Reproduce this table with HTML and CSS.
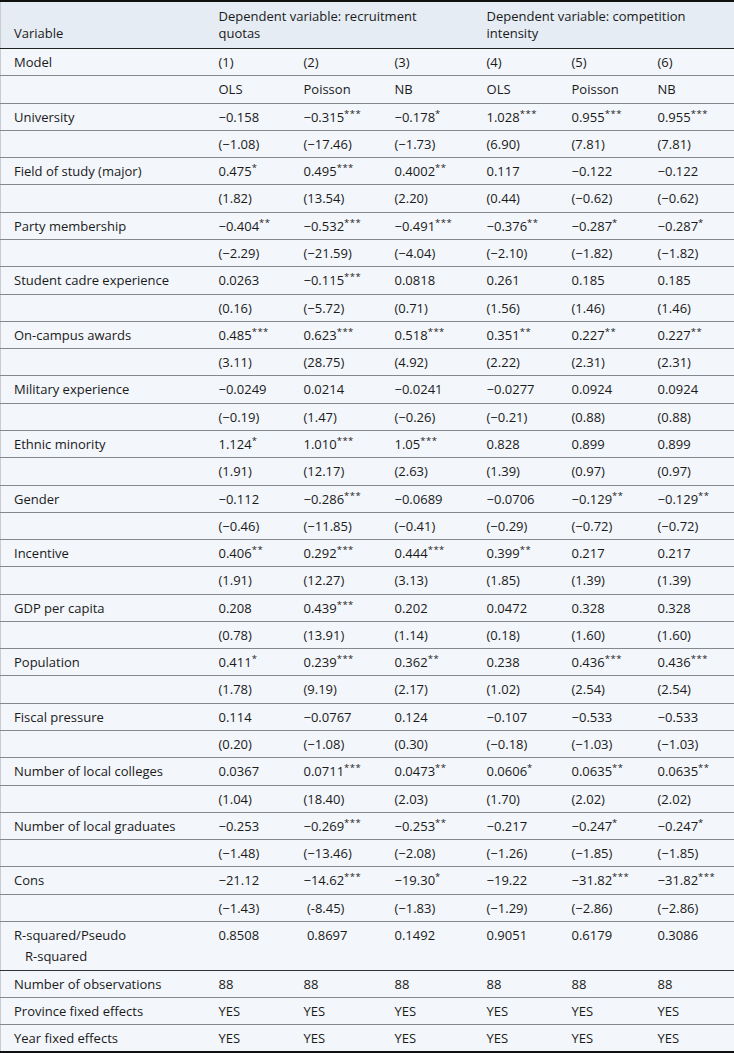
FILE: index.html
```html
<!DOCTYPE html>
<html lang="en">
<head>
<meta charset="utf-8">
<title>Regression results</title>
<link rel="stylesheet" href="styles.css">
</head>
<body>
<table class="tbl">
  <colgroup>
    <col class="c0"><col class="c1"><col class="c2"><col class="c3"><col class="c4"><col class="c5"><col class="c6">
  </colgroup>
  <thead>
    <tr>
      <th>Variable</th>
      <th colspan="3">Dependent variable: recruitment quotas</th>
      <th colspan="3">Dependent variable: competition intensity</th>
    </tr>
  </thead>
  <tbody>
    <tr><td>Model</td><td>(1)</td><td>(2)</td><td>(3)</td><td>(4)</td><td>(5)</td><td>(6)</td></tr>
    <tr><td></td><td>OLS</td><td>Poisson</td><td>NB</td><td>OLS</td><td>Poisson</td><td>NB</td></tr>
    <tr><td>University</td><td>−0.158</td><td>−0.315<sup>***</sup></td><td>−0.178<sup>*</sup></td><td>1.028<sup>***</sup></td><td>0.955<sup>***</sup></td><td>0.955<sup>***</sup></td></tr>
    <tr><td></td><td>(−1.08)</td><td>(−17.46)</td><td>(−1.73)</td><td>(6.90)</td><td>(7.81)</td><td>(7.81)</td></tr>
    <tr><td>Field of study (major)</td><td>0.475<sup>*</sup></td><td>0.495<sup>***</sup></td><td>0.4002<sup>**</sup></td><td>0.117</td><td>−0.122</td><td>−0.122</td></tr>
    <tr><td></td><td>(1.82)</td><td>(13.54)</td><td>(2.20)</td><td>(0.44)</td><td>(−0.62)</td><td>(−0.62)</td></tr>
    <tr><td>Party membership</td><td>−0.404<sup>**</sup></td><td>−0.532<sup>***</sup></td><td>−0.491<sup>***</sup></td><td>−0.376<sup>**</sup></td><td>−0.287<sup>*</sup></td><td>−0.287<sup>*</sup></td></tr>
    <tr><td></td><td>(−2.29)</td><td>(−21.59)</td><td>(−4.04)</td><td>(−2.10)</td><td>(−1.82)</td><td>(−1.82)</td></tr>
    <tr><td>Student cadre experience</td><td>0.0263</td><td>−0.115<sup>***</sup></td><td>0.0818</td><td>0.261</td><td>0.185</td><td>0.185</td></tr>
    <tr><td></td><td>(0.16)</td><td>(−5.72)</td><td>(0.71)</td><td>(1.56)</td><td>(1.46)</td><td>(1.46)</td></tr>
    <tr><td>On-campus awards</td><td>0.485<sup>***</sup></td><td>0.623<sup>***</sup></td><td>0.518<sup>***</sup></td><td>0.351<sup>**</sup></td><td>0.227<sup>**</sup></td><td>0.227<sup>**</sup></td></tr>
    <tr><td></td><td>(3.11)</td><td>(28.75)</td><td>(4.92)</td><td>(2.22)</td><td>(2.31)</td><td>(2.31)</td></tr>
    <tr><td>Military experience</td><td>−0.0249</td><td>0.0214</td><td>−0.0241</td><td>−0.0277</td><td>0.0924</td><td>0.0924</td></tr>
    <tr><td></td><td>(−0.19)</td><td>(1.47)</td><td>(−0.26)</td><td>(−0.21)</td><td>(0.88)</td><td>(0.88)</td></tr>
    <tr><td>Ethnic minority</td><td>1.124<sup>*</sup></td><td>1.010<sup>***</sup></td><td>1.05<sup>***</sup></td><td>0.828</td><td>0.899</td><td>0.899</td></tr>
    <tr><td></td><td>(1.91)</td><td>(12.17)</td><td>(2.63)</td><td>(1.39)</td><td>(0.97)</td><td>(0.97)</td></tr>
    <tr><td>Gender</td><td>−0.112</td><td>−0.286<sup>***</sup></td><td>−0.0689</td><td>−0.0706</td><td>−0.129<sup>**</sup></td><td>−0.129<sup>**</sup></td></tr>
    <tr><td></td><td>(−0.46)</td><td>(−11.85)</td><td>(−0.41)</td><td>(−0.29)</td><td>(−0.72)</td><td>(−0.72)</td></tr>
    <tr><td>Incentive</td><td>0.406<sup>**</sup></td><td>0.292<sup>***</sup></td><td>0.444<sup>***</sup></td><td>0.399<sup>**</sup></td><td>0.217</td><td>0.217</td></tr>
    <tr><td></td><td>(1.91)</td><td>(12.27)</td><td>(3.13)</td><td>(1.85)</td><td>(1.39)</td><td>(1.39)</td></tr>
    <tr><td>GDP per capita</td><td>0.208</td><td>0.439<sup>***</sup></td><td>0.202</td><td>0.0472</td><td>0.328</td><td>0.328</td></tr>
    <tr><td></td><td>(0.78)</td><td>(13.91)</td><td>(1.14)</td><td>(0.18)</td><td>(1.60)</td><td>(1.60)</td></tr>
    <tr><td>Population</td><td>0.411<sup>*</sup></td><td>0.239<sup>***</sup></td><td>0.362<sup>**</sup></td><td>0.238</td><td>0.436<sup>***</sup></td><td>0.436<sup>***</sup></td></tr>
    <tr><td></td><td>(1.78)</td><td>(9.19)</td><td>(2.17)</td><td>(1.02)</td><td>(2.54)</td><td>(2.54)</td></tr>
    <tr><td>Fiscal pressure</td><td>0.114</td><td>−0.0767</td><td>0.124</td><td>−0.107</td><td>−0.533</td><td>−0.533</td></tr>
    <tr><td></td><td>(0.20)</td><td>(−1.08)</td><td>(0.30)</td><td>(−0.18)</td><td>(−1.03)</td><td>(−1.03)</td></tr>
    <tr><td>Number of local colleges</td><td>0.0367</td><td>0.0711<sup>***</sup></td><td>0.0473<sup>**</sup></td><td>0.0606<sup>*</sup></td><td>0.0635<sup>**</sup></td><td>0.0635<sup>**</sup></td></tr>
    <tr><td></td><td>(1.04)</td><td>(18.40)</td><td>(2.03)</td><td>(1.70)</td><td>(2.02)</td><td>(2.02)</td></tr>
    <tr><td>Number of local graduates</td><td>−0.253</td><td>−0.269<sup>***</sup></td><td>−0.253<sup>**</sup></td><td>−0.217</td><td>−0.247<sup>*</sup></td><td>−0.247<sup>*</sup></td></tr>
    <tr><td></td><td>(−1.48)</td><td>(−13.46)</td><td>(−2.08)</td><td>(−1.26)</td><td>(−1.85)</td><td>(−1.85)</td></tr>
    <tr><td>Cons</td><td>−21.12</td><td>−14.62<sup>***</sup></td><td>−19.30<sup>*</sup></td><td>−19.22</td><td>−31.82<sup>***</sup></td><td>−31.82<sup>***</sup></td></tr>
    <tr><td></td><td>(−1.43)</td><td>&nbsp;(-8.45)</td><td>(−1.83)</td><td>(−1.29)</td><td>(−2.86)</td><td>(−2.86)</td></tr>
    <tr class="tall"><td><div>R-squared/Pseudo</div><div class="indent">R-squared</div></td><td>0.8508</td><td>&nbsp;0.8697</td><td>0.1492</td><td>0.9051</td><td>0.6179</td><td>0.3086</td></tr>
    <tr><td>Number of observations</td><td>88</td><td>88</td><td>88</td><td>88</td><td>88</td><td>88</td></tr>
    <tr><td>Province fixed effects</td><td>YES</td><td>YES</td><td>YES</td><td>YES</td><td>YES</td><td>YES</td></tr>
    <tr><td>Year fixed effects</td><td>YES</td><td>YES</td><td>YES</td><td>YES</td><td>YES</td><td>YES</td></tr>
  </tbody>
</table>
</body>
</html>
```

FILE: styles.css
```css
html, body {
  margin: 0;
  padding: 0;
  background: #ffffff;
}

.tbl {
  width: 734px;
  table-layout: fixed;
  border-collapse: collapse;
  font-family: "Open Sans", "Noto Sans", sans-serif;
  font-size: 13px;
  color: #1a1a1a;
  background: #f3f6fa;
  border-top: 2px solid #111;
  border-bottom: 2px solid #111;
  border-left: 1px solid #c9ccd0;
  border-right: 1px solid #c9ccd0;
}

.c0 { width: 205px; }
.c1 { width: 85px; }
.c2 { width: 91px; }
.c3 { width: 92px; }
.c4 { width: 85px; }
.c5 { width: 86px; }
.c6 { width: 90px; }

.tbl thead th {
  background: #e5ecf3;
  font-weight: normal;
  text-align: left;
  vertical-align: bottom;
  padding: 6px 13px 6px 13px;
  line-height: 17px;
  border-bottom: 1px solid #222;
}

.tbl td {
  text-align: left;
  vertical-align: top;
  padding: 5px 13px 5px 13px;
  line-height: 16.28px;
  border-bottom: 1px solid #85888c;
  white-space: nowrap;
}

.tbl tr.tall td {
  border-bottom-color: #333;
}

.indent {
  padding-left: 11px;
  margin-top: 5px;
}

sup {
  font-size: 9.5px;
  line-height: 0;
  vertical-align: 5px;
  letter-spacing: 0.5px;
}
```
